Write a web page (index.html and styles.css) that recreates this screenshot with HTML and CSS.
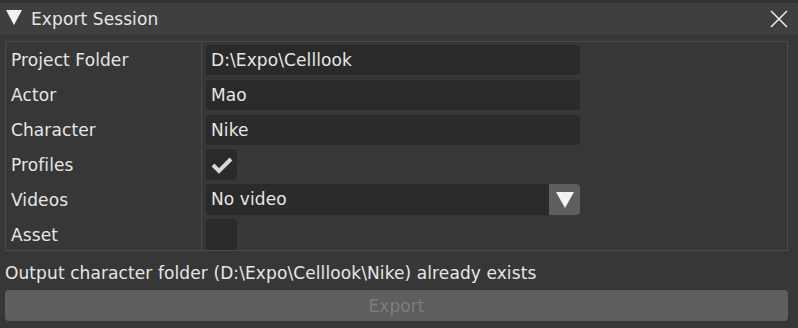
FILE: index.html
```html
<!DOCTYPE html>
<html lang="en">
<head>
  <meta charset="UTF-8" />
  <title>Export Session</title>
  <link rel="stylesheet" href="styles.css">
</head>
<body>
  <div class="window">
    <div class="title-bar">
      <span class="collapse"></span>
      <span class="title">Export Session</span>
      <svg class="close" width="18" height="18" viewBox="0 0 18 18">
        <path d="M1 1 L17 17 M17 1 L1 17" stroke="#f0f0f0" stroke-width="1.5" fill="none"/>
      </svg>
    </div>

    <div class="table">
      <div class="row">
        <div class="label">Project Folder</div>
        <div class="cell"><div class="input">D:\Expo\Celllook</div></div>
      </div>
      <div class="row">
        <div class="label">Actor</div>
        <div class="cell"><div class="input">Mao</div></div>
      </div>
      <div class="row">
        <div class="label">Character</div>
        <div class="cell"><div class="input">Nike</div></div>
      </div>
      <div class="row">
        <div class="label">Profiles</div>
        <div class="cell">
          <div class="check">
            <svg width="22" height="18" viewBox="0 0 22 18">
              <path d="M2 9 L8 15 L20 3" stroke="#d8d8d8" stroke-width="4" fill="none"/>
            </svg>
          </div>
        </div>
      </div>
      <div class="row">
        <div class="label">Videos</div>
        <div class="cell">
          <div class="combo">
            <span class="combo-value">No video</span>
            <span class="combo-btn"><span class="arrow"></span></span>
          </div>
        </div>
      </div>
      <div class="row">
        <div class="label">Asset</div>
        <div class="cell"><div class="check"></div></div>
      </div>
    </div>

    <div class="status">Output character folder (D:\Expo\Celllook\Nike) already exists</div>
    <button class="export" disabled>Export</button>
  </div>
</body>
</html>
```

FILE: styles.css
```css
body {
  margin: 0;
  background-color: #373737;
  font-family: "DejaVu Sans", sans-serif;
  font-size: 17px;
  letter-spacing: 0.1px;
  color: #e6e6e6;
}

.window {
  width: 798px;
  height: 328px;
  display: flex;
  flex-direction: column;
}

.title-bar {
  height: 34px;
  background-color: #3f3f3f;
  border-top: 3px solid #333333;
  box-sizing: border-box;
  display: flex;
  align-items: center;
  padding: 0 10px 0 6px;
}

.collapse {
  width: 0;
  height: 0;
  border-left: 8px solid transparent;
  border-right: 8px solid transparent;
  border-top: 15px solid #f2f2f2;
  margin-right: 9px;
  margin-top: -2px;
}

.title {
  flex: 1;
  margin-top: 1px;
}

.close {
  margin-top: 0;
}

.table {
  margin: 7px 10px 0 5px;
  border: 1px solid #4a4a4a;
  height: 210px;
  box-sizing: border-box;
  overflow: hidden;
  display: flex;
  flex-direction: column;
}

.row {
  display: flex;
  flex-shrink: 0;
  height: 35px;
  align-items: center;
}

.label {
  width: 190px;
  padding-left: 5px;
  height: 100%;
  display: flex;
  align-items: center;
  border-right: 1px solid #4a4a4a;
}

.cell {
  padding-left: 4px;
  display: flex;
  align-items: center;
}

.input {
  width: 369px;
  height: 30px;
  line-height: 30px;
  padding-left: 5px;
  background-color: #2a2a2a;
  border-radius: 4px;
}

.check {
  width: 31px;
  height: 31px;
  background-color: #2a2a2a;
  border-radius: 4px;
  display: flex;
  align-items: center;
  justify-content: center;
}

.combo {
  width: 374px;
  height: 31px;
  display: flex;
  background-color: #2a2a2a;
  border-radius: 4px;
  overflow: hidden;
}

.combo-value {
  flex: 1;
  line-height: 31px;
  padding-left: 5px;
}

.combo-btn {
  width: 31px;
  background-color: #5e5e5e;
  display: flex;
  align-items: center;
  justify-content: center;
}

.arrow {
  width: 0;
  height: 0;
  border-left: 9px solid transparent;
  border-right: 9px solid transparent;
  border-top: 16px solid #f2f2f2;
}

.status {
  padding: 9px 5px 0;
  height: 28px;
  line-height: 26px;
}

.export {
  margin: 2px 10px 0 5px;
  height: 31px;
  border: none;
  border-radius: 4px;
  background-color: #5e5e5e;
  color: #7c7c7c;
  font-family: "DejaVu Sans", sans-serif;
  font-size: 17px;
  letter-spacing: 0.1px;
}
```
